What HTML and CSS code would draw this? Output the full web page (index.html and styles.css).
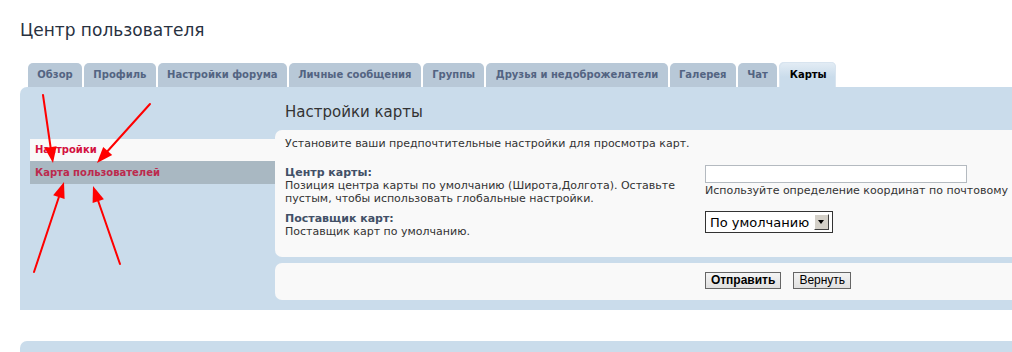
FILE: index.html
```html
<!DOCTYPE html>
<html lang="ru">

<head>
    <meta charset="UTF-8">
    <meta name="viewport" content="width=device-width, initial-scale=1.0">
    <title>Центр пользователя</title>
    <link rel="stylesheet" href="styles.css">
</head>

<body>
    <div id="page">
        <h1 class="pageTitle">Центр пользователя</h1>

        <ul class="tabs">
            <li class="tab">Обзор</li>
            <li class="tab">Профиль</li>
            <li class="tab">Настройки форума</li>
            <li class="tab">Личные сообщения</li>
            <li class="tab">Группы</li>
            <li class="tab">Друзья и недоброжелатели</li>
            <li class="tab">Галерея</li>
            <li class="tab">Чат</li>
            <li class="tab activeTab">Карты</li>
        </ul>

        <div class="panel">
            <!-- Left menu -->
            <ul class="sideMenu">
                <li class="menuItem">Настройки</li>
                <li class="menuItem currentItem">Карта пользователей</li>
            </ul>

            <div class="mainColumn">
                <h2 class="sectionTitle">Настройки карты</h2>

                <div class="box">
                    <p class="intro">Установите ваши предпочтительные настройки для просмотра карт.</p>

                    <div class="row">
                        <div class="label">
                            <strong>Центр карты:</strong><br>
                            Позиция центра карты по умолчанию (Широта,Долгота). Оставьте пустым, чтобы использовать глобальные настройки.
                        </div>
                        <div class="field">
                            <input type="text" class="textInput">
                            <div class="hint">Используйте определение координат по почтовому</div>
                        </div>
                    </div>

                    <div class="row">
                        <div class="label">
                            <strong>Поставщик карт:</strong><br>
                            Поставщик карт по умолчанию.
                        </div>
                        <div class="field">
                            <div class="selectBox">
                                <select class="selectInput">
                                    <option>По умолчанию</option>
                                </select>
                                <span class="selectArrow"></span>
                            </div>
                        </div>
                    </div>
                </div>

                <div class="box submitBox">
                    <button class="button mainButton">Отправить</button>
                    <button class="button">Вернуть</button>
                </div>
            </div>
        </div>

        <div class="panel nextPanel"></div>
    </div>

    <!-- Red arrows drawn over the screenshot -->
    <svg class="arrows" width="1012" height="352" viewBox="0 0 1012 352">
        <g stroke="#ff0000" stroke-width="2" fill="#ff0000" stroke-linecap="round">
            <line x1="43" y1="95" x2="50.7" y2="148"></line>
            <polygon points="53,163 56.6,146.3 44.7,148" stroke="none"></polygon>

            <line x1="150" y1="104" x2="107.7" y2="151"></line>
            <polygon points="97,163 103.2,147.1 112.2,155.1" stroke="none"></polygon>

            <line x1="34" y1="272" x2="58.9" y2="197"></line>
            <polygon points="64,182 64.6,199.1 53.2,195.3" stroke="none"></polygon>

            <line x1="120" y1="264" x2="98.2" y2="201"></line>
            <polygon points="93,186 103.9,199.2 92.6,203.1" stroke="none"></polygon>
        </g>
    </svg>
</body>

</html>
```

FILE: styles.css
```css
html,
body {
    overflow: hidden;
}

body {
    margin: 0;
    background-color: white;
    color: #333333;
    font-family: "DejaVu Sans", Verdana, sans-serif;
    font-size: 11px;
    position: relative;
}

#page {
    width: 1300px;
    padding: 19px 0 0 20px;
}

.pageTitle {
    margin: 0;
    font-size: 17px;
    line-height: 22px;
    font-weight: normal;
    color: #28313f;
}

.tabs {
    display: flex;
    align-items: flex-end;
    gap: 2px;
    list-style: none;
    height: 25px;
    margin: 21px 0 0 8px;
    padding: 0;
}

.tab {
    height: 24px;
    line-height: 24px;
    padding: 0 9.35px;
    background-color: #b8c8d7;
    color: #536482;
    font-weight: bold;
    font-size: 10px;
    border-radius: 5px 5px 0 0;
    white-space: nowrap;
}

.activeTab {
    height: 25px;
    line-height: 26px;
    color: black;
    padding: 0 9.5px 0 10.5px;
    background: linear-gradient(#e4edf5, #cadceb 60%);
    box-shadow: inset 1px 1px 0 #d8e4ef, inset -1px 0 0 #d8e4ef;
}

.panel {
    display: flex;
    background-color: #cadceb;
    border-radius: 7px 0 0 0;
    padding: 16px 0 10px 10px;
}

.sideMenu {
    list-style: none;
    margin: 36px 0 0 0;
    padding: 0;
    width: 245px;
    flex-shrink: 0;
}

.menuItem {
    height: 22px;
    line-height: 22px;
    padding-left: 5px;
    background-color: #f9f9f9;
    color: #d31141;
    font-size: 10px;
    font-weight: bold;
}

.currentItem {
    height: 23px;
    line-height: 23px;
    background-color: #a9b8c2;
    color: #bc2a4d;
}

.mainColumn {
    width: 1002px;
}

.sectionTitle {
    margin: 0 0 9px 10px;
    font-size: 15px;
    line-height: 18px;
    font-weight: normal;
    color: #333333;
}

.box {
    background-color: #f9f9f9;
    border-radius: 7px;
    padding: 7px 10px 19px 10px;
    line-height: 13px;
}

.intro {
    margin: 0 0 15px 0;
}

.row {
    display: flex;
    align-items: flex-start;
    margin-bottom: 6px;
}

.row:last-child {
    margin-bottom: 0;
}

.label {
    width: 410px;
    padding-top: 1px;
    padding-right: 10px;
    flex-shrink: 0;
}

.label strong {
    color: #425067;
}

.field {
    white-space: nowrap;
}

.textInput {
    display: block;
    box-sizing: border-box;
    width: 262px;
    height: 18px;
    margin: 0;
    border: 1px solid #b4bac0;
    background-color: white;
}

.hint {
    margin-top: 1px;
    line-height: 13px;
}

.selectBox {
    display: inline-flex;
    align-items: center;
    box-sizing: border-box;
    height: 22px;
    border: 1px solid #333333;
    background-color: white;
    padding-right: 3px;
}

.selectInput {
    appearance: none;
    -webkit-appearance: none;
    border: none;
    background: transparent;
    font-family: "DejaVu Sans", Verdana, sans-serif;
    font-size: 13px;
    color: black;
    padding: 0 4px;
    margin: 0;
}

.selectArrow {
    position: relative;
    box-sizing: border-box;
    width: 15px;
    height: 16px;
    background-color: #d4d0c8;
    border-top: 1px solid #ffffff;
    border-left: 1px solid #ffffff;
    border-right: 1px solid #404040;
    border-bottom: 1px solid #404040;
}

.selectArrow::after {
    content: "";
    position: absolute;
    left: 3px;
    top: 5px;
    border-left: 3.5px solid transparent;
    border-right: 3.5px solid transparent;
    border-top: 4px solid black;
}

.submitBox {
    margin-top: 6px;
    padding: 9px 0 11px 4px;
    text-align: center;
    font-size: 0;
}

.button {
    height: 17px;
    padding: 0 5px;
    margin: 0 6px;
    border: 1px solid #666666;
    background: linear-gradient(#f4f4f4, #e0e0e0);
    font-family: "Liberation Sans", Arial, sans-serif;
    font-size: 12px;
    line-height: 15px;
    color: black;
    vertical-align: top;
}

.mainButton {
    font-weight: bold;
}

.nextPanel {
    margin-top: 31px;
    height: 40px;
    padding: 0;
}

.arrows {
    position: absolute;
    left: 0;
    top: 0;
    pointer-events: none;
}
```
